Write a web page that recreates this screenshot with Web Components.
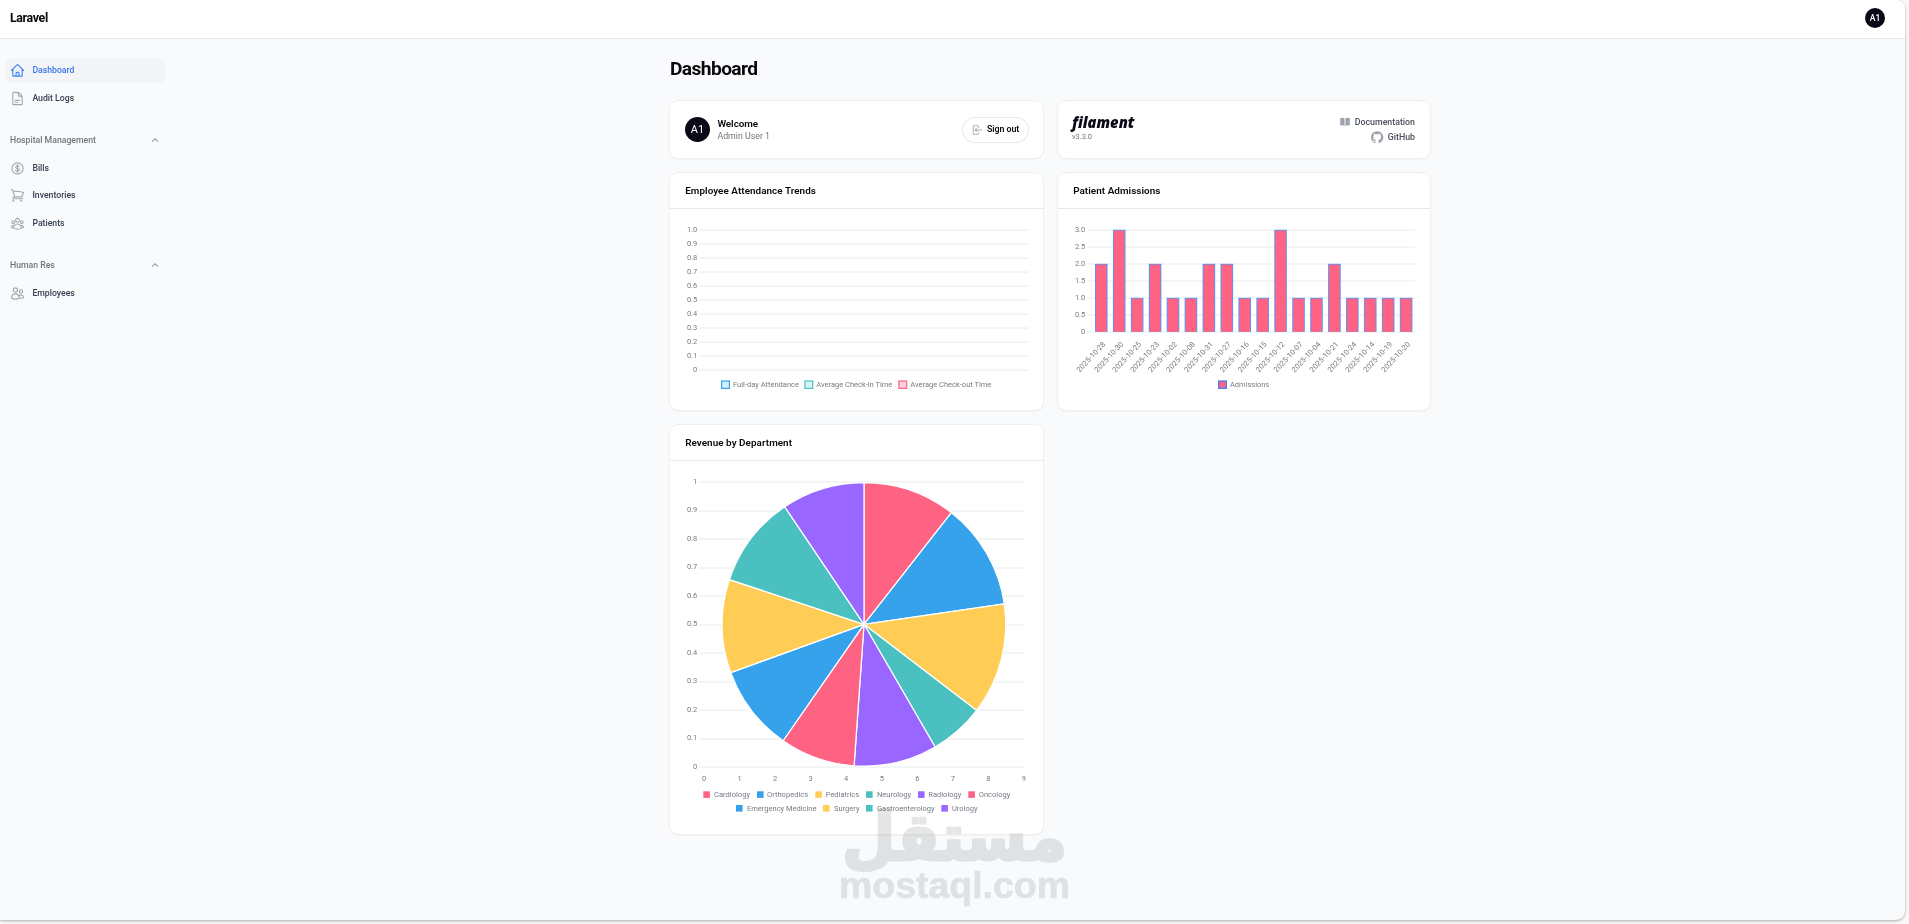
<!DOCTYPE html>
<html lang="en"><head><meta charset="utf-8"><title>Dashboard - Laravel</title>
<style>
html,body{margin:0;height:100%;overflow:hidden;background:#f8f8f9}
body{font-family:Roboto,"Liberation Sans",sans-serif;color:#09090b}
</style></head><body>
<admin-app></admin-app>
<script>
const ICONS={
home:'<path d="m2.25 12 8.954-8.955c.44-.439 1.152-.439 1.591 0L21.75 12M4.5 9.75v10.125c0 .621.504 1.125 1.125 1.125H9.75v-4.875c0-.621.504-1.125 1.125-1.125h2.25c.621 0 1.125.504 1.125 1.125V21h4.125c.621 0 1.125-.504 1.125-1.125V9.75M8.25 21h8.25"/>',
doc:'<path d="M19.5 14.25v-2.625a3.375 3.375 0 0 0-3.375-3.375h-1.5A1.125 1.125 0 0 1 13.5 7.125v-1.5a3.375 3.375 0 0 0-3.375-3.375H8.25m0 12.75h7.5m-7.5 3H12M10.5 2.25H5.625c-.621 0-1.125.504-1.125 1.125v17.25c0 .621.504 1.125 1.125 1.125h12.75c.621 0 1.125-.504 1.125-1.125V11.25a9 9 0 0 0-9-9Z"/>',
dollar:'<path d="M12 6v12m-3-2.818.879.659c1.171.879 3.07.879 4.242 0 1.172-.879 1.172-2.303 0-3.182C13.536 12.219 12.768 12 12 12c-.725 0-1.45-.22-2.003-.659-1.106-.879-1.106-2.303 0-3.182s2.9-.879 4.006 0l.415.33M21 12a9 9 0 1 1-18 0 9 9 0 0 1 18 0Z"/>',
cart:'<path d="M2.25 3h1.386c.51 0 .955.343 1.087.835l.383 1.437M7.5 14.25a3 3 0 0 0-3 3h15.75m-12.75-3h11.218c1.121-2.3 2.1-4.684 2.924-7.138a60.114 60.114 0 0 0-16.536-1.84M7.5 14.25 5.106 5.272M6 20.25a.75.75 0 1 1-1.5 0 .75.75 0 0 1 1.5 0Zm12.75 0a.75.75 0 1 1-1.5 0 .75.75 0 0 1 1.5 0Z"/>',
group:'<path d="M18 18.72a9.094 9.094 0 0 0 3.741-.479 3 3 0 0 0-4.682-2.72m.94 3.198.001.031c0 .225-.012.447-.037.666A11.944 11.944 0 0 1 12 21c-2.17 0-4.207-.576-5.963-1.584A6.062 6.062 0 0 1 6 18.719m12 0a5.971 5.971 0 0 0-.941-3.197m0 0A5.995 5.995 0 0 0 12 12.75a5.995 5.995 0 0 0-5.058 2.772m0 0a3 3 0 0 0-4.681 2.72 8.986 8.986 0 0 0 3.74.477m.94-3.197a5.971 5.971 0 0 0-.94 3.197M15 6.75a3 3 0 1 1-6 0 3 3 0 0 1 6 0Zm6 3a2.25 2.25 0 1 1-4.5 0 2.25 2.25 0 0 1 4.5 0Zm-13.5 0a2.25 2.25 0 1 1-4.5 0 2.25 2.25 0 0 1 4.5 0Z"/>',
users:'<path d="M15 19.128a9.38 9.38 0 0 0 2.625.372 9.337 9.337 0 0 0 4.121-.952 4.125 4.125 0 0 0-7.533-2.493M15 19.128v-.003c0-1.113-.285-2.16-.786-3.07M15 19.128v.106A12.318 12.318 0 0 1 8.624 21c-2.331 0-4.512-.645-6.374-1.766l-.001-.109a6.375 6.375 0 0 1 11.964-3.07M12 6.375a3.375 3.375 0 1 1-6.75 0 3.375 3.375 0 0 1 6.75 0Zm8.25 2.25a2.625 2.625 0 1 1-5.25 0 2.625 2.625 0 0 1 5.25 0Z"/>',
up:'<path stroke-width="2.6" d="m5.5 15.5 6.5-6.5 6.5 6.5"/>'
};
const SOLID={
out:['0 0 20 20','<path d="M3 4.25A2.25 2.25 0 0 1 5.25 2h5.5A2.25 2.25 0 0 1 13 4.25v2a.75.75 0 0 1-1.5 0v-2a.75.75 0 0 0-.75-.75h-5.5a.75.75 0 0 0-.75.75v11.5c0 .414.336.75.75.75h5.5a.75.75 0 0 0 .75-.75v-2a.75.75 0 0 1 1.5 0v2A2.25 2.25 0 0 1 10.75 18h-5.5A2.25 2.25 0 0 1 3 15.75V4.25Z"/><path d="M19 10a.75.75 0 0 0-.75-.75H8.704l1.048-.943a.75.75 0 1 0-1.004-1.114l-2.5 2.25a.75.75 0 0 0 0 1.114l2.5 2.25a.75.75 0 1 0 1.004-1.114l-1.048-.943h9.546A.75.75 0 0 0 19 10Z"/>'],
book:['0 0 20 20','<path d="M10.75 16.82A7.462 7.462 0 0 1 15 15.5c.71 0 1.396.098 2.046.282A.75.75 0 0 0 18 15.06v-11a.75.75 0 0 0-.546-.721A9.006 9.006 0 0 0 15 3a8.963 8.963 0 0 0-4.25 1.065V16.82ZM9.25 4.065A8.963 8.963 0 0 0 5 3c-.85 0-1.673.118-2.454.339A.75.75 0 0 0 2 4.06v11a.75.75 0 0 0 .954.721A7.506 7.506 0 0 1 5 15.5c1.579 0 3.042.487 4.25 1.32V4.065Z"/>'],
github:['0 0 98 96','<path d="M48.854 0C21.839 0 0 22 0 49.217c0 21.756 13.993 40.172 33.405 46.69 2.427.49 3.316-1.059 3.316-2.362 0-1.141-.08-5.052-.08-9.127-13.59 2.934-16.42-5.867-16.42-5.867-2.184-5.704-5.42-7.17-5.42-7.17-4.448-3.015.324-3.015.324-3.015 4.934.326 7.523 5.052 7.523 5.052 4.367 7.496 11.404 5.378 14.235 4.074.404-3.178 1.699-5.378 3.074-6.6-10.839-1.141-22.243-5.378-22.243-24.283 0-5.378 1.94-9.778 5.014-13.2-.485-1.222-2.184-6.275.486-13.038 0 0 4.125-1.304 13.426 5.052a46.97 46.97 0 0 1 12.214-1.63c4.125 0 8.33.571 12.213 1.63 9.302-6.356 13.427-5.052 13.427-5.052 2.67 6.763.97 11.816.485 13.038 3.155 3.422 5.015 7.822 5.015 13.2 0 18.905-11.404 23.06-22.324 24.283 1.78 1.548 3.316 4.481 3.316 9.126 0 6.6-.08 11.897-.08 13.526 0 1.304.89 2.853 3.316 2.364 19.412-6.52 33.405-24.935 33.405-46.691C97.707 22 75.788 0 48.854 0z"/>']
};
function define(name,css,html){
  customElements.define(name,class extends HTMLElement{
    constructor(){super();this.attachShadow({mode:'open'});}
    connectedCallback(){this.shadowRoot.innerHTML='<style>'+css+'</style>'+(typeof html==='function'?html(this):html);}
  });
}
define('ui-icon',':host{display:block;flex:none}svg{display:block;width:100%;height:100%}',el=>{
  const n=el.getAttribute('name'),s=SOLID[n];
  return s?`<svg viewBox="${s[0]}" fill="currentColor">${s[1]}</svg>`
    :`<svg viewBox="0 0 24 24" fill="none" stroke="currentColor" stroke-width="1.75" stroke-linecap="round" stroke-linejoin="round">${ICONS[n]}</svg>`;
});
define('user-avatar',':host{display:flex;align-items:center;justify-content:center;flex:none;box-sizing:border-box;border-radius:50%;background:#0a0918;color:#fff}','<slot></slot>');
define('top-bar',`:host{display:flex;align-items:center;justify-content:space-between;box-sizing:border-box;height:39px;padding:0 20px 3px 10px;background:#fff;border-bottom:1px solid #e6e7ea}
.brand{font-size:12.4px;font-weight:700;letter-spacing:-.36px}user-avatar{width:20px;height:20px;font-size:8.6px;font-weight:500}`,
'<div class="brand">Laravel</div><user-avatar>A1</user-avatar>');
define('nav-item',`:host{display:flex;align-items:center;height:24.6px;box-sizing:border-box;padding-left:4.8px;gap:7.6px;border-radius:7px;font-size:8.7px;font-weight:500;color:#374151}
:host([active]){background:#f3f4f6;color:#3b74f0}ui-icon{width:15px;height:15px;color:#a3a6af;position:relative;top:.4px}:host([active]) ui-icon{color:#3b82f6}`,
el=>`<ui-icon name="${el.getAttribute('icon')}"></ui-icon><span><slot></slot></span>`);
define('nav-group',`:host{display:flex;flex-direction:column;gap:3px;margin-top:17px}
.label{display:flex;align-items:center;justify-content:space-between;height:25.2px;padding:0 6px 0 5px;font-size:8.7px;font-weight:500;color:#71757f}ui-icon{width:10px;height:10px;color:#9ca3af}`,
el=>`<div class="label"><span>${el.getAttribute('label')}</span><ui-icon name="up"></ui-icon></div><slot></slot>`);
define('side-nav',`:host{display:block;width:161px;padding:19px 0 0 5px;flex:none}.top{display:flex;flex-direction:column;gap:3.2px}`,
`<div class="top"><nav-item icon="home" active>Dashboard</nav-item><nav-item icon="doc">Audit Logs</nav-item></div>
<nav-group label="Hospital Management"><nav-item icon="dollar">Bills</nav-item><nav-item icon="cart">Inventories</nav-item><nav-item icon="group">Patients</nav-item></nav-group>
<nav-group label="Human Res"><nav-item icon="users">Employees</nav-item></nav-group>`);
define('ui-card',`:host{display:block;box-sizing:border-box;background:#fff;border-radius:8px;box-shadow:0 0 0 1px #eeeff1,0 1px 1.5px #0000001c;overflow:hidden}`,'<slot></slot>');
define('account-widget',`:host{display:flex;align-items:center;height:57px;box-sizing:border-box;padding:0 15px 0 15px}
user-avatar{width:25px;height:25px;font-size:11px}.who{flex:1;margin-left:7.4px}.a{font-size:9.9px;font-weight:600;line-height:13px;letter-spacing:-.05px}.b{font-size:8.8px;line-height:13px;color:#71757f}
.btn{display:flex;align-items:center;gap:4px;box-sizing:border-box;height:24px;width:65px;padding-left:8px;border-radius:12px;box-shadow:0 0 0 1px #e8e9ec,0 1px 1px #0000000d;font-size:8.8px;font-weight:600;letter-spacing:-.05px;white-space:nowrap}.btn span{position:relative;top:-.5px}ui-icon{width:12px;height:12px;color:#a3a6af}`,
`<user-avatar>A1</user-avatar><div class="who"><div class="a">Welcome</div><div class="b">Admin User 1</div></div><div class="btn"><ui-icon name="out"></ui-icon><span>Sign out</span></div>`);
define('filament-widget',`:host{display:flex;justify-content:space-between;height:57px;box-sizing:border-box;padding:13.4px 15px 0 14px}
svg{display:block;width:64px;height:14px;overflow:visible}.v{font-size:7.5px;line-height:10px;margin-top:3.9px;color:#71757f;letter-spacing:-.05px}
.links{display:flex;flex-direction:column;align-items:flex-end}.l{display:flex;align-items:center;gap:4px;height:15px;font-size:8.8px;font-weight:500;color:#4b4f5a}ui-icon{color:#9ca3af;width:12px;height:12px}.g{width:12.4px;height:12.4px}`,
`<div><svg><text x="0" y="13.8" font-family="Open Sans" font-size="15.6" font-weight="800" font-style="italic" fill="#0a0918" textLength="62.5" lengthAdjust="spacingAndGlyphs">filament</text></svg><div class="v">v3.3.0</div></div>
<div class="links"><div class="l"><ui-icon name="book"></ui-icon><span>Documentation</span></div><div class="l"><ui-icon class="g" name="github"></ui-icon><span>GitHub</span></div></div>`);
define('chart-widget',`:host{display:block}.h{display:flex;align-items:center;height:34.5px;padding:0 15.2px;border-bottom:1px solid #e6e7ea;font-size:9.9px;font-weight:600;letter-spacing:.05px}`,
el=>`<div class="h">${el.getAttribute('heading')}</div><slot></slot>`);

/* Chart drawings use one shared plane; each viewBox selects the body of its card. */
const chartCss=':host{display:block}svg{display:block;width:100%}text{font-size:7.5px;fill:#777b86}';
const txt=(x,y,s,a='start',w)=>`<text x="${x}" y="${y}" text-anchor="${a}"${w?` textLength="${w}" lengthAdjust="spacingAndGlyphs"`:''}>${s}</text>`;
const grid=(x1,x2,y0,step,labels)=>labels.map((l,i)=>{const y=Math.round(y0+i*step)+.5;
  return `<path d="M${x1} ${y}H${x2}" stroke="#e7e8ea" stroke-width=".9"/>`+txt(x1-2.2,y0+i*step+2.2,l,'end');}).join('');
const svg=(x,y,w,h,b)=>`<svg viewBox="${x} ${y} ${w} ${h}" style="height:${h}px">${b}</svg>`;
define('attendance-chart',chartCss,()=>{
  let b=grid(699.5,1028,230,14,['1.0','0.9','0.8','0.7','0.6','0.5','0.4','0.3','0.2','0.1','0']);
  [[721,'#36a2eb','#d7ecfb',733,66,'Full-day Attendance'],[804.3,'#4bc0c0','#dbf2f2',816.3,76,'Average Check-in Time'],[898.3,'#ff6384','#ffd0da',910.3,81,'Average Check-out Time']]
  .forEach(([x,c,f,tx,w,t])=>{b+=`<rect x="${x+.6}" y="381.5" width="7.8" height="7.4" fill="${f}" stroke="${c}" stroke-width="1.2"/>`+txt(tx,387.5,t,'start',w);});
  return svg(670,209.5,373,201.5,b);
});
define('admissions-chart',chartCss,()=>{
  let b=grid(1087.5,1415,230,17,['3.0','2.5','2.0','1.5','1.0','0.5','0']);
  const d=['28','30','25','23','02','08','31','27','16','15','12','07','04','21','24','14','19','20'],v=[2,3,1,2,1,1,2,2,1,1,3,1,1,2,1,1,1,1];
  d.forEach((day,i)=>{const c=1101.3+i*17.93,y=332.3-v[i]*34;
    b+=`<rect x="${c-6.3}" y="${y}" width="12.6" height="${332.3-y}" fill="#5b95f3"/><rect x="${c-5.3}" y="${y+.9}" width="10.6" height="${331.4-y}" fill="#ff6384"/>`;
    b+=`<g transform="translate(${c+4.6} 345) rotate(-47)">${txt(0,0,'2025-10-'+day,'end',38.5)}</g>`;});
  b+='<rect x="1218.6" y="381.5" width="7.8" height="7.4" fill="#ff6384" stroke="#3b82f6" stroke-width="1.2"/>'+txt(1230,387.5,'Admissions','start',39.2);
  return svg(1058,209.5,372,201.5,b);
});
define('revenue-chart',chartCss,()=>{
  let b=grid(699.5,1024,482,28.5,['1','0.9','0.8','0.7','0.6','0.5','0.4','0.3','0.2','0.1','0']);
  for(let i=0;i<10;i++)b+=txt(704+i*35.55,781.2,i,'middle');
  const a=[0,38.06,81.7,127.4,149.9,184,214.8,250.1,288.4,326,360],c=['#ff6384','#36a2eb','#ffcd56','#4bc0c0','#9966ff'];
  const p=t=>{t=t*Math.PI/180;return (864+141.8*Math.sin(t)).toFixed(2)+' '+(624.8-141.8*Math.cos(t)).toFixed(2);};
  for(let i=0;i<10;i++)b+=`<path d="M864 624.8L${p(a[i])}A141.8 141.8 0 0 1 ${p(a[i+1])}Z" fill="${c[i%5]}" stroke="#fff" stroke-width="1.25" stroke-linejoin="bevel"/>`;
  [[703.3,714,36,'Cardiology'],[757,767,41.2,'Orthopedics'],[815.3,825.7,33.5,'Pediatrics'],[866,877,34,'Neurology'],[918,928.3,33,'Radiology'],[968.3,978.7,31.6,'Oncology'],
   [736,747,69.5,'Emergency Medicine'],[823,834,25.5,'Surgery'],[866,877,57.6,'Gastroenterology'],[941.3,952,25.5,'Urology']]
  .forEach(([x,tx,w,t],i)=>{const y=i<6?791.8:805.5;const k=i%5;b+=`<rect x="${x}" y="${y}" width="6.6" height="6.6" fill="${c[k]}"/>`+txt(tx,y+5.7,t,'start',w);});
  return svg(670,461.5,373,373.5,b);
});
define('water-mark',':host{display:block;position:absolute;left:830px;top:790px;width:250px;height:120px;mix-blend-mode:multiply;pointer-events:none}svg{display:block;overflow:visible}',
`<svg width="250" height="120" viewBox="830 790 250 120" fill="#e5e6e6" stroke="#e5e6e6" stroke-linejoin="round">
<text x="1067" y="860" direction="rtl" font-family="DejaVu Sans" font-weight="700" font-size="66" stroke-width="3" textLength="225" lengthAdjust="spacingAndGlyphs">مستقل</text>
<text x="839" y="897.6" font-family="Liberation Sans" font-weight="700" font-size="37.5" stroke-width=".6" textLength="231" lengthAdjust="spacingAndGlyphs">mostaql.com</text></svg>`);
define('dash-board',`:host{display:block;flex:none;width:760px;padding-top:16px}h1{margin:0;font-size:19.2px;line-height:27px;font-weight:700;letter-spacing:-.6px;height:46px}
.grid{display:grid;grid-template-columns:373px 372px;column-gap:15px;row-gap:15px}`,
`<h1>Dashboard</h1><div class="grid">
<ui-card><account-widget></account-widget></ui-card><ui-card><filament-widget></filament-widget></ui-card>
<ui-card><chart-widget heading="Employee Attendance Trends"><attendance-chart></attendance-chart></chart-widget></ui-card>
<ui-card><chart-widget heading="Patient Admissions"><admissions-chart></admissions-chart></chart-widget></ui-card>
<ui-card><chart-widget heading="Revenue by Department"><revenue-chart></revenue-chart></chart-widget></ui-card></div>`);
define('admin-app',`:host{display:block;width:1905px;height:920px;overflow:hidden;background:#f9fafc;border-radius:0 9px 9px 0;box-shadow:0 1px 3px #0000004d}
.body{display:flex}dash-board{margin-left:504px}`,
`<top-bar></top-bar><div class="body"><side-nav></side-nav><dash-board></dash-board></div><water-mark></water-mark>`);
</script></body></html>
